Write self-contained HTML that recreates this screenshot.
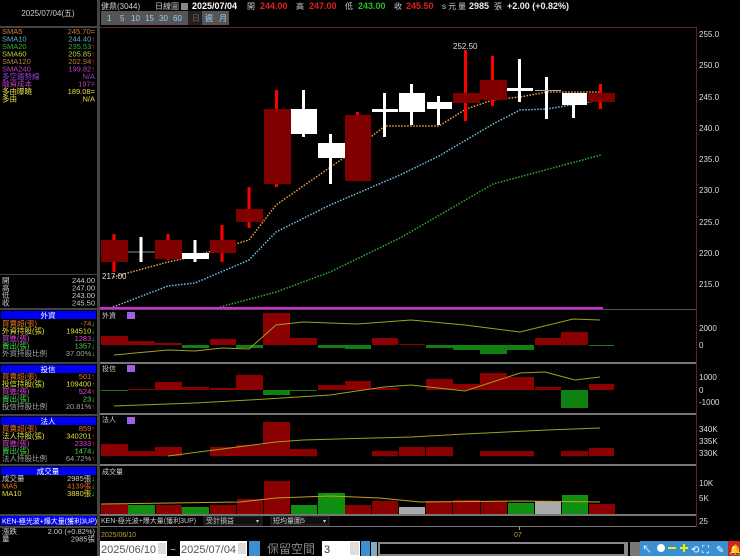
<!DOCTYPE html>
<html><head><meta charset="utf-8"><style>
html,body{margin:0;padding:0;background:#000;width:740px;height:556px;overflow:hidden}
svg{display:block}
text{font-family:"Liberation Sans","Noto Sans CJK TC",sans-serif}
</style></head><body>
<svg width="740" height="556" viewBox="0 0 740 556" xmlns="http://www.w3.org/2000/svg">
<rect width="740" height="556" fill="#000"/>
<!-- left panel frame -->
<rect x="97" y="0" width="3" height="556" fill="#444"/>
<rect x="0" y="26" width="97" height="2" fill="#444"/>
<text x="48" y="16" fill="#ccc" font-size="8" text-anchor="middle">2025/07/04(五)</text>
<g font-size="7.5">
<text x="2" y="34" fill="#d08030">SMA5</text><text x="95" y="34" fill="#d08030" text-anchor="end">245.70=</text>
<text x="2" y="41.5" fill="#5ab0d0">SMA10</text><text x="95" y="41.5" fill="#5ab0d0" text-anchor="end">244.40<tspan fill="#f22">↑</tspan></text>
<text x="2" y="49" fill="#30b030">SMA20</text><text x="95" y="49" fill="#30b030" text-anchor="end">235.53<tspan fill="#f22">↑</tspan></text>
<text x="2" y="56.5" fill="#c8c840">SMA60</text><text x="95" y="56.5" fill="#c8c840" text-anchor="end">205.85<tspan fill="#f22">↑</tspan></text>
<text x="2" y="64" fill="#b08040">SMA120</text><text x="95" y="64" fill="#b08040" text-anchor="end">202.94<tspan fill="#f22">↑</tspan></text>
<text x="2" y="71.5" fill="#c040c0">SMA240</text><text x="95" y="71.5" fill="#c040c0" text-anchor="end">199.82<tspan fill="#f22">↑</tspan></text>
<text x="2" y="79" fill="#9040d0">多空趨勢線</text><text x="95" y="79" fill="#9040d0" text-anchor="end">N/A</text>
<text x="2" y="86.5" fill="#c040c0">融資成本</text><text x="95" y="86.5" fill="#c040c0" text-anchor="end">197=</text>
<text x="2" y="94" fill="#e0e040">多由曝曉</text><text x="95" y="94" fill="#e0e040" text-anchor="end">189.08=</text>
<text x="2" y="101.5" fill="#e0e040">多由</text><text x="95" y="101.5" fill="#e0e040" text-anchor="end">N/A</text>
<!-- OHLC -->
<rect x="0" y="274" width="97" height="1" fill="#444"/>
<text x="2" y="283" fill="#ccc">開</text><text x="95" y="283" fill="#ccc" text-anchor="end">244.00</text>
<text x="2" y="290.5" fill="#ccc">高</text><text x="95" y="290.5" fill="#ccc" text-anchor="end">247.00</text>
<text x="2" y="298" fill="#ccc">低</text><text x="95" y="298" fill="#ccc" text-anchor="end">243.00</text>
<text x="2" y="305.5" fill="#ccc">收</text><text x="95" y="305.5" fill="#ccc" text-anchor="end">245.50</text>
<rect x="0" y="308" width="97" height="2" fill="#444"/>
<!-- 外資 -->
<rect x="1" y="311" width="95" height="8" fill="#0000f0"/><text x="48" y="318" fill="#fff" text-anchor="middle">外資</text>
<text x="2" y="326" fill="#e07020">買賣超(張)</text><text x="95" y="326" fill="#e07020" text-anchor="end">-74<tspan fill="#2e2">↓</tspan></text>
<text x="2" y="333.5" fill="#e0e040">外資持股(張)</text><text x="95" y="333.5" fill="#e0e040" text-anchor="end">194510<tspan fill="#2e2">↓</tspan></text>
<text x="2" y="341" fill="#e040e0">買進(張)</text><text x="95" y="341" fill="#e040e0" text-anchor="end">1283<tspan fill="#2e2">↓</tspan></text>
<text x="2" y="348.5" fill="#40e040">賣出(張)</text><text x="95" y="348.5" fill="#40e040" text-anchor="end">1357<tspan fill="#2e2">↓</tspan></text>
<text x="2" y="356" fill="#a0a0a0">外資持股比例</text><text x="95" y="356" fill="#a0a0a0" text-anchor="end">37.00%<tspan fill="#2e2">↓</tspan></text>
<rect x="0" y="362" width="97" height="2" fill="#444"/>
<!-- 投信 -->
<rect x="1" y="365" width="95" height="8" fill="#0000f0"/><text x="48" y="372" fill="#fff" text-anchor="middle">投信</text>
<text x="2" y="379" fill="#e07020">買賣超(張)</text><text x="95" y="379" fill="#e07020" text-anchor="end">501<tspan fill="#f22">↑</tspan></text>
<text x="2" y="386.5" fill="#e0e040">投信持股(張)</text><text x="95" y="386.5" fill="#e0e040" text-anchor="end">109400<tspan fill="#f22">↑</tspan></text>
<text x="2" y="394" fill="#e040e0">買進(張)</text><text x="95" y="394" fill="#e040e0" text-anchor="end">524<tspan fill="#f22">↑</tspan></text>
<text x="2" y="401.5" fill="#40e040">賣出(張)</text><text x="95" y="401.5" fill="#40e040" text-anchor="end">23<tspan fill="#2e2">↓</tspan></text>
<text x="2" y="409" fill="#a0a0a0">投信持股比例</text><text x="95" y="409" fill="#a0a0a0" text-anchor="end">20.81%<tspan fill="#f22">↑</tspan></text>
<rect x="0" y="414" width="97" height="2" fill="#444"/>
<!-- 法人 -->
<rect x="1" y="417" width="95" height="8" fill="#0000f0"/><text x="48" y="424" fill="#fff" text-anchor="middle">法人</text>
<text x="2" y="431" fill="#e07020">買賣超(張)</text><text x="95" y="431" fill="#e07020" text-anchor="end">859<tspan fill="#f22">↑</tspan></text>
<text x="2" y="438.5" fill="#e0e040">法人持股(張)</text><text x="95" y="438.5" fill="#e0e040" text-anchor="end">340201<tspan fill="#f22">↑</tspan></text>
<text x="2" y="446" fill="#e040e0">買進(張)</text><text x="95" y="446" fill="#e040e0" text-anchor="end">2333<tspan fill="#f22">↑</tspan></text>
<text x="2" y="453.5" fill="#40e040">賣出(張)</text><text x="95" y="453.5" fill="#40e040" text-anchor="end">1474<tspan fill="#2e2">↓</tspan></text>
<text x="2" y="461" fill="#a0a0a0">法人持股比例</text><text x="95" y="461" fill="#a0a0a0" text-anchor="end">64.72%<tspan fill="#f22">↑</tspan></text>
<rect x="0" y="464" width="97" height="2" fill="#444"/>
<!-- 成交量 -->
<rect x="1" y="467" width="95" height="8" fill="#0000f0"/><text x="48" y="474" fill="#fff" text-anchor="middle">成交量</text>
<text x="2" y="481" fill="#ccc">成交量</text><text x="95" y="481" fill="#ccc" text-anchor="end">2985張<tspan fill="#2e2">↓</tspan></text>
<text x="2" y="488.5" fill="#e07020">MA5</text><text x="95" y="488.5" fill="#e07020" text-anchor="end">4139張<tspan fill="#2e2">↓</tspan></text>
<text x="2" y="496" fill="#e0e040">MA10</text><text x="95" y="496" fill="#e0e040" text-anchor="end">3880張<tspan fill="#2e2">↓</tspan></text>
<rect x="0" y="514" width="97" height="2" fill="#444"/>
<rect x="1" y="516" width="95" height="9" fill="#0000f0"/><text x="2" y="523.5" fill="#fff" font-size="7">KEN-極光波+爆大量(獲利3UP)</text>
<rect x="0" y="526" width="97" height="2" fill="#444"/>
<text x="2" y="534" fill="#ccc">漲跌</text><text x="95" y="534" fill="#ccc" text-anchor="end">2.00 (+0.82%)</text>
<text x="2" y="541.5" fill="#ccc">量</text><text x="95" y="541.5" fill="#ccc" text-anchor="end">2985張</text>
</g>

<!-- header -->
<g font-size="9">
<text x="101" y="9" fill="#ccc" font-size="8">健鼎(3044)</text>
<text x="155" y="9" fill="#ccc" font-size="8">日線圖</text>
<rect x="181" y="3" width="7" height="7" fill="#888"/>
<text x="192" y="9" fill="#fff" font-weight="bold">2025/07/04</text>
<text x="247" y="9" fill="#ccc" font-size="8">開</text><text x="260" y="9" fill="#e02020" font-weight="bold">244.00</text>
<text x="296" y="9" fill="#ccc" font-size="8">高</text><text x="309" y="9" fill="#e02020" font-weight="bold">247.00</text>
<text x="345" y="9" fill="#ccc" font-size="8">低</text><text x="358" y="9" fill="#20c020" font-weight="bold">243.00</text>
<text x="394" y="9" fill="#ccc" font-size="8">收</text><text x="406" y="9" fill="#e02020" font-weight="bold">245.50</text>
<text x="442" y="9" fill="#ccc" font-size="8">s 元</text>
<text x="458" y="9" fill="#ccc" font-size="8">量</text><text x="469" y="9" fill="#eee" font-weight="bold">2985</text><text x="494" y="9" fill="#ccc" font-size="8">張</text>
<text x="507" y="9" fill="#eee" font-weight="bold">+2.00 (+0.82%)</text>
</g>
<g font-size="8" fill="#9cf">
<rect x="101" y="11" width="128" height="14" fill="#555"/>
<rect x="188" y="11" width="14" height="14" fill="#222"/>
<text x="107" y="21">1</text><text x="120" y="21">5</text><text x="131" y="21">10</text><text x="145" y="21">15</text><text x="159" y="21">30</text><text x="173" y="21">60</text>
<text x="192" y="21" fill="#666">日</text><text x="205" y="21">週</text><text x="219" y="21">月</text>
</g>

<!-- main chart frame -->
<rect x="100" y="27" width="596" height="1" fill="#602030"/>
<rect x="696" y="27" width="1" height="500" fill="#602030"/>
<g font-size="8" fill="#ddd">
<text x="699" y="37">255.0</text><text x="699" y="68">250.0</text><text x="699" y="100">245.0</text><text x="699" y="131">240.0</text><text x="699" y="162">235.0</text><text x="699" y="193">230.0</text><text x="699" y="225">225.0</text><text x="699" y="256">220.0</text><text x="699" y="287">215.0</text>
</g>
<!-- MA lines -->
<g fill="none" stroke-width="1.5" stroke-dasharray="1.5 1.5">
<polyline stroke="#30b030" points="220,307 276,292 330,272 400,238 493,184 601,155"/>
<polyline stroke="#70c0e0" points="113,307 168,286 195,283 249,260 276,232 330,205 400,175 439,156 493,124 520,110 547,109 601,100"/>
<polyline stroke="#f0a040" points="113,277 168,262 195,256 249,240 276,205 345,157 385,126 439,126 466,109 493,100 520,97 547,92 601,92"/>
</g>
<!-- candles -->
<g>
<rect x="112.5" y="234" width="3" height="38" fill="#f00"/><rect x="101" y="240" width="27" height="22" fill="#800000"/>
<rect x="128" y="251.5" width="27" height="1" fill="#888"/><rect x="139.5" y="237" width="3" height="25" fill="#fff"/>
<rect x="166.5" y="234" width="3" height="26" fill="#f00"/><rect x="155" y="240" width="27" height="19" fill="#800000"/>
<rect x="193.5" y="240" width="3" height="22" fill="#fff"/><rect x="182" y="253" width="27" height="6" fill="#fff"/>
<rect x="220.5" y="225" width="3" height="37" fill="#f00"/><rect x="210" y="240" width="26" height="13" fill="#800000"/>
<rect x="247.5" y="187" width="3" height="41" fill="#f00"/><rect x="236" y="209" width="27" height="13" fill="#800000"/>
<rect x="275" y="90" width="3" height="97" fill="#f00"/><rect x="264" y="109" width="27" height="75" fill="#800000"/>
<rect x="302" y="90" width="3" height="47" fill="#fff"/><rect x="291" y="109" width="26" height="25" fill="#fff"/>
<rect x="329" y="134" width="3" height="50" fill="#fff"/><rect x="318" y="143" width="27" height="15" fill="#fff"/>
<rect x="356" y="112" width="3" height="69" fill="#f00"/><rect x="345" y="115" width="26" height="66" fill="#800000"/>
<rect x="383" y="93" width="3" height="44" fill="#fff"/><rect x="372" y="109" width="26" height="3" fill="#fff"/>
<rect x="410" y="84" width="3" height="41" fill="#fff"/><rect x="399" y="93" width="26" height="19" fill="#fff"/>
<rect x="437" y="96" width="3" height="29" fill="#fff"/><rect x="427" y="102" width="25" height="7" fill="#fff"/>
<rect x="464" y="50" width="3" height="71" fill="#f00"/><rect x="453" y="93" width="27" height="10" fill="#800000"/>
<rect x="491" y="56" width="3" height="50" fill="#f00"/><rect x="480" y="80" width="27" height="20" fill="#800000"/>
<rect x="518" y="59" width="3" height="43" fill="#fff"/><rect x="507" y="88" width="26" height="3" fill="#fff"/>
<rect x="545" y="77" width="3" height="42" fill="#fff"/><rect x="535" y="90" width="26" height="1" fill="#aaa"/>
<rect x="572" y="93" width="3" height="25" fill="#fff"/><rect x="562" y="93" width="25" height="12" fill="#fff"/>
<rect x="599" y="84" width="3" height="25" fill="#f00"/><rect x="588" y="93" width="27" height="9" fill="#800000"/>
</g>
<text x="102" y="279" fill="#ddd" font-size="8">217.00</text>
<text x="453" y="49" fill="#ddd" font-size="8">252.50</text>
<rect x="100" y="307" width="503" height="2" fill="#e020e0"/>
<rect x="100" y="309" width="596" height="1" fill="#555"/>

<!-- Panel 1 外資 -->
<text x="102" y="318" fill="#ccc" font-size="7">外資</text><rect x="127" y="312" width="8" height="7" fill="#a060e0"/>
<g fill="#8b0000">
<rect x="101" y="336" width="27" height="9"/><rect x="128" y="341" width="27" height="4"/><rect x="155" y="343" width="27" height="2"/><rect x="210" y="339" width="26" height="6"/><rect x="263" y="313" width="27" height="32"/><rect x="290" y="338" width="27" height="7"/><rect x="372" y="338" width="26" height="7"/><rect x="399" y="344" width="26" height="1"/><rect x="535" y="338" width="26" height="7"/><rect x="561" y="332" width="27" height="13"/>
</g>
<g fill="#108010">
<rect x="182" y="345" width="27" height="3"/><rect x="236" y="345" width="27" height="3"/><rect x="318" y="345" width="27" height="3"/><rect x="345" y="345" width="26" height="4"/><rect x="426" y="345" width="27" height="3"/><rect x="453" y="345" width="27" height="5"/><rect x="480" y="345" width="27" height="9"/><rect x="507" y="345" width="27" height="5"/><rect x="589" y="345" width="25" height="1"/>
</g>
<polyline fill="none" stroke="#a0a020" stroke-width="1" points="114,355 168,350 195,351 222,348 249,349 276,325 303,322 357,324 411,320 465,325 520,332 573,319 600,320"/>
<g font-size="8" fill="#ddd"><text x="699" y="331">2000</text><text x="699" y="348">0</text></g>
<rect x="100" y="362" width="596" height="2" fill="#777"/>

<!-- Panel 2 投信 -->
<text x="102" y="371" fill="#ccc" font-size="7">投信</text><rect x="127" y="365" width="8" height="7" fill="#a060e0"/>
<g fill="#8b0000">
<rect x="128" y="389" width="27" height="1"/><rect x="155" y="382" width="27" height="8"/><rect x="182" y="387" width="27" height="3"/><rect x="210" y="388" width="26" height="2"/><rect x="236" y="375" width="27" height="15"/><rect x="318" y="385" width="27" height="5"/><rect x="345" y="381" width="26" height="9"/><rect x="372" y="388" width="26" height="2"/><rect x="426" y="379" width="27" height="11"/><rect x="453" y="384" width="27" height="6"/><rect x="480" y="373" width="27" height="17"/><rect x="507" y="377" width="27" height="13"/><rect x="535" y="387" width="26" height="3"/><rect x="589" y="384" width="25" height="6"/>
</g>
<g fill="#108010">
<rect x="101" y="390" width="27" height="1"/><rect x="263" y="390" width="27" height="5"/><rect x="290" y="390" width="27" height="1"/><rect x="561" y="390" width="27" height="18"/>
</g>
<polyline fill="none" stroke="#a0a020" stroke-width="1" points="114,406 195,403 249,400 330,395 384,387 411,385 465,391 520,373 545,372 575,380 600,377"/>
<g font-size="8" fill="#ddd"><text x="699" y="380">1000</text><text x="699" y="393">0</text><text x="699" y="405">-1000</text></g>
<rect x="100" y="413" width="596" height="2" fill="#777"/>

<!-- Panel 3 法人 -->
<text x="102" y="422" fill="#ccc" font-size="7">法人</text><rect x="127" y="417" width="8" height="7" fill="#a060e0"/>
<g fill="#8b0000">
<rect x="101" y="444" width="27" height="12"/><rect x="128" y="451" width="27" height="5"/><rect x="155" y="447" width="27" height="9"/><rect x="210" y="447" width="26" height="9"/><rect x="236" y="445" width="27" height="11"/><rect x="263" y="422" width="27" height="34"/><rect x="290" y="449" width="27" height="7"/><rect x="372" y="451" width="26" height="5"/><rect x="399" y="447" width="26" height="9"/><rect x="426" y="447" width="27" height="9"/><rect x="480" y="451" width="27" height="5"/><rect x="507" y="451" width="27" height="5"/><rect x="561" y="451" width="27" height="5"/><rect x="589" y="448" width="25" height="8"/>
</g>
<polyline fill="none" stroke="#a0a020" stroke-width="1" points="168,456 276,442 303,440 411,437 465,434 547,430 600,428"/>
<g font-size="8" fill="#ddd"><text x="699" y="432">340K</text><text x="699" y="444">335K</text><text x="699" y="456">330K</text></g>
<rect x="100" y="464" width="596" height="2" fill="#777"/>

<!-- Panel 4 成交量 -->
<text x="102" y="474" fill="#ccc" font-size="7">成交量</text>
<g>
<rect x="101" y="504" width="27" height="11" fill="#8b0000"/><rect x="128" y="505" width="27" height="10" fill="#109010"/><rect x="156" y="505" width="26" height="10" fill="#8b0000"/><rect x="182" y="507" width="27" height="8" fill="#109010"/><rect x="210" y="505" width="26" height="10" fill="#8b0000"/><rect x="237" y="499" width="26" height="16" fill="#8b0000"/><rect x="264" y="481" width="26" height="34" fill="#8b0000"/><rect x="291" y="505" width="26" height="10" fill="#109010"/><rect x="318" y="493" width="27" height="22" fill="#109010"/><rect x="345" y="505" width="26" height="10" fill="#8b0000"/><rect x="372" y="501" width="26" height="14" fill="#8b0000"/><rect x="399" y="507" width="26" height="8" fill="#aaa"/><rect x="426" y="501" width="26" height="14" fill="#8b0000"/><rect x="453" y="500" width="27" height="15" fill="#8b0000"/><rect x="481" y="501" width="26" height="14" fill="#8b0000"/><rect x="508" y="503" width="26" height="12" fill="#109010"/><rect x="535" y="501" width="26" height="14" fill="#aaa"/><rect x="562" y="495" width="26" height="20" fill="#109010"/><rect x="589" y="504" width="26" height="11" fill="#8b0000"/>
</g>
<polyline fill="none" stroke="#c0a020" stroke-width="1" points="101,504 240,502 276,498 330,496 380,498 420,502 520,501 600,502"/>
<g font-size="8" fill="#ddd"><text x="699" y="486">10K</text><text x="699" y="501">5K</text><text x="699" y="524">25</text></g>
<rect x="100" y="514" width="596" height="2" fill="#777"/>
<rect x="100" y="526" width="596" height="1" fill="#777"/>
<g font-size="7" fill="#ccc">
<text x="101" y="523">KEN-極光波+爆大量(獲利3UP)</text>
<rect x="204" y="516" width="58" height="9" fill="#111" stroke="#555" stroke-width="0.5"/><text x="206" y="523">受計損益</text><text x="256" y="523" font-size="6">▾</text>
<rect x="271" y="516" width="58" height="9" fill="#111" stroke="#555" stroke-width="0.5"/><text x="273" y="523">短均量圖5</text><text x="323" y="523" font-size="6">▾</text>
</g>
<rect x="519" y="527" width="1" height="3" fill="#aa4"/>
<text x="514" y="537" fill="#bba030" font-size="7">07</text>
<text x="101" y="537" fill="#bba030" font-size="7">2025/06/10</text>

<!-- bottom row -->
<rect x="100" y="541" width="67" height="15" fill="#fff"/><text x="101" y="553" fill="#555" font-size="11">2025/06/10</text><rect x="158" y="543" width="8" height="11" fill="#ddd"/>
<text x="170" y="553" fill="#ccc" font-size="10">~</text>
<rect x="180" y="541" width="67" height="15" fill="#fff"/><text x="181" y="553" fill="#555" font-size="11">2025/07/04</text><rect x="238" y="543" width="8" height="11" fill="#ddd"/>
<rect x="249" y="541" width="11" height="15" fill="#3a8fd0"/>
<text x="267" y="553" fill="#888" font-size="12">保留空間</text>
<rect x="322" y="541" width="38" height="15" fill="#fff"/><text x="324" y="553" fill="#333" font-size="11">3</text><rect x="350" y="542" width="9" height="13" fill="#ddd"/>
<rect x="361" y="541" width="9" height="15" fill="#3a8fd0"/>
<rect x="371" y="542" width="6" height="14" fill="#8ab"/>
<rect x="378" y="542" width="250" height="14" fill="#888"/><rect x="380" y="544" width="244" height="10" fill="#000"/>
<rect x="630" y="542" width="10" height="14" fill="#777"/>
<rect x="640" y="541" width="88" height="15" fill="#3a8fd0"/>
<rect x="728" y="541" width="12" height="15" fill="#d02020"/>
<g font-size="10" fill="#fff"><text x="642" y="553">↖</text><circle cx="661" cy="548" r="4" fill="#fff"/><rect x="668" y="547" width="8" height="2" fill="#ee0"/><rect x="680" y="547" width="8" height="2" fill="#ee0"/><rect x="683" y="544" width="2" height="8" fill="#ee0"/><text x="691" y="553">⟲</text><text x="702" y="553">⛶</text><text x="716" y="553">✎</text><text x="729" y="553" fill="#ee0">🔔</text></g>
</svg>
</body></html>
